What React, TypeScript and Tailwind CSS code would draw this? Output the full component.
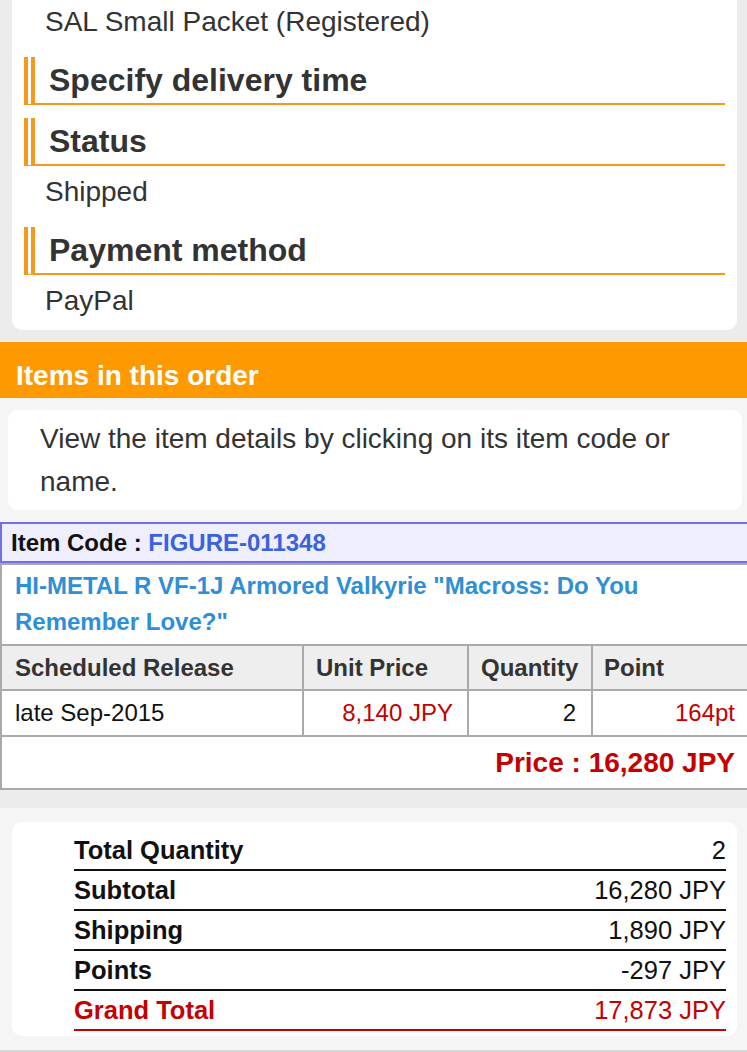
import React from "react";

function P({ children, after }: { children: React.ReactNode; after?: boolean }) {
  return (
    <div
      className={
        "pl-[33px] h-[36px] leading-[36px] text-[28px] text-[#333] mb-[4px] " +
        (after ? "mt-[8px]" : "")
      }
    >
      {children}
    </div>
  );
}

function H({ children }: { children: React.ReactNode }) {
  return (
    <div className="mt-[13px] mx-[12px] h-[48px] border-solid border-b-2 border-l-[11px] [border-left-style:double] border-[#f39a1e] pl-[14px] flex items-center text-[32px] font-bold text-[#333]">
      {children}
    </div>
  );
}

function Row({ label, value, last }: { label: string; value: string; last?: boolean }) {
  return (
    <div
      className={
        "h-[40px] border-b-2 flex items-center justify-between text-[25.5px] " +
        (last ? "border-[#c40000] text-[#c40000]" : "border-[#111] text-[#111]")
      }
    >
      <span className="font-bold">{label}</span>
      <span>{value}</span>
    </div>
  );
}

export default function App() {
  return (
    <div className="min-h-screen bg-[#ececec] font-['Liberation_Sans',Arial,sans-serif] overflow-hidden">
      <div className="ml-[12px] mr-[10px] bg-white rounded-b-[10px] pt-[4px] pb-[7px] flex flex-col">
        <P>SAL Small Packet (Registered)</P>
        <H>Specify delivery time</H>
        <H>Status</H>
        <P after>Shipped</P>
        <H>Payment method</H>
        <P after>PayPal</P>
      </div>

      <div className="mt-[12px] h-[56px] bg-[#ff9900] text-white font-bold text-[28px] pl-[16px] pt-[11px] flex items-center">
        Items in this order
      </div>

      <div className="bg-[#f5f5f5] pt-[12px] pb-[12px]">
        <div className="ml-[8px] mr-[5px] bg-white rounded-[10px] pl-[32px] pr-[40px] py-[7px] text-[28px] leading-[43px] text-[#333]">
          View the item details by clicking on its item code or name.
        </div>
      </div>

      <div className="bg-white">
        <div className="h-[41px] border-y-2 border-l-2 border-[#7070e8] bg-[#eeeeff] pl-[9px] flex items-center text-[24px] font-bold text-[#111]">
          <span>Item Code :&nbsp;</span>
          <span className="text-[#3a62dc]">FIGURE-011348</span>
        </div>
        <div className="border-l-2 border-b-2 border-[#aaa]">
          <div className="border-t-2 border-[#aaa] pl-[13px] pr-[20px] pt-[3px] pb-[4px] leading-[36px] text-[24px] font-bold text-[#2f8fd6]">
            HI-METAL R VF-1J Armored Valkyrie "Macross: Do You Remember Love?"
          </div>
          <div className="flex border-t-2 border-[#aaa] bg-[#eeeeee] h-[45px] text-[24px] font-bold text-[#333]">
            <div className="w-[302px] border-r-2 border-[#aaa] pl-[13px] flex items-center">Scheduled Release</div>
            <div className="w-[165px] border-r-2 border-[#aaa] pl-[12px] flex items-center">Unit Price</div>
            <div className="w-[124px] border-r-2 border-[#aaa] pl-[12px] flex items-center">Quantity</div>
            <div className="flex-1 pl-[11px] flex items-center">Point</div>
          </div>
          <div className="flex border-t-2 border-[#aaa] h-[46px] text-[24px] text-[#111]">
            <div className="w-[302px] border-r-2 border-[#aaa] pl-[13px] flex items-center">late Sep-2015</div>
            <div className="w-[165px] border-r-2 border-[#aaa] pr-[14px] flex items-center justify-end text-[#c40000]">8,140 JPY</div>
            <div className="w-[124px] border-r-2 border-[#aaa] pr-[15px] flex items-center justify-end">2</div>
            <div className="flex-1 pr-[12px] flex items-center justify-end text-[#c40000]">164pt</div>
          </div>
          <div className="border-t-2 border-[#aaa] h-[53px] pr-[12px] flex items-center justify-end text-[28px] font-bold text-[#c40000]">
            Price : 16,280 JPY
          </div>
        </div>
      </div>

      <div className="mt-[18px] bg-[#f5f5f5] pt-[14px] pb-[14px]">
        <div className="ml-[12px] mr-[10px] bg-white rounded-[10px] pt-[9px] pb-[5px] pl-[62px] pr-[11px]">
          <Row label="Total Quantity" value="2" />
          <Row label="Subtotal" value="16,280 JPY" />
          <Row label="Shipping" value="1,890 JPY" />
          <Row label="Points" value="-297 JPY" />
          <Row label="Grand Total" value="17,873 JPY" last />
        </div>
      </div>
      <div className="h-[40px] bg-[#d9d9d9]" />
    </div>
  );
}
